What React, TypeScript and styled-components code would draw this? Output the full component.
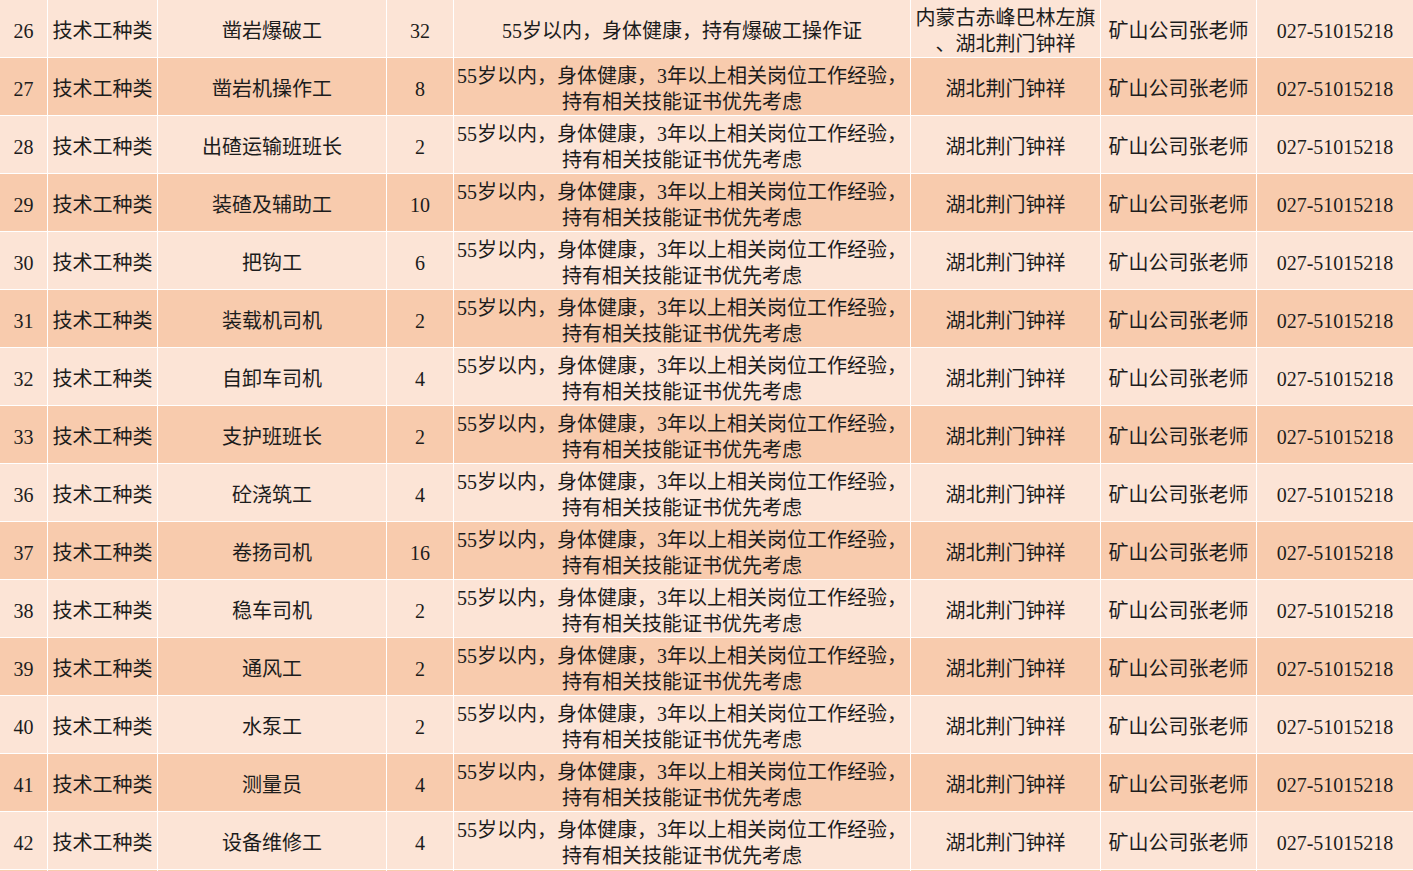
import styled, { createGlobalStyle } from "styled-components";

const GlobalStyle = createGlobalStyle`
  html, body {
    margin: 0;
    padding: 0;
    overflow: hidden;
    background: #ffffff;
  }
`;

const Sheet = styled.div`
  display: grid;
  grid-template-columns: 47px 109px 228px 66px 456px 189px 155px 156px;
  grid-auto-rows: 57px;
  gap: 1px;
  background: #ffffff;
  width: 1413px;
  height: 871px;
  overflow: hidden;
  font-family: "Liberation Serif", "Noto Sans CJK SC", serif;
  font-size: 20px;
  color: #1c1c1c;
`;

const Cell = styled.div<{ $dark: boolean }>`
  display: flex;
  align-items: center;
  justify-content: center;
  box-sizing: border-box;
  padding-top: 4px;
  text-align: center;
  white-space: nowrap;
  line-height: 26px;
  background: ${(p) => (p.$dark ? "#f8cbad" : "#fce4d6")};
  overflow: hidden;
`;

const Lines = styled.span`
  display: block;
`;

const STD = ["55岁以内，身体健康，3年以上相关岗位工作经验，", "持有相关技能证书优先考虑"];

type Row = {
  no: string;
  job: string;
  count: string;
  req: string[];
  place: string[];
};

const rows: Row[] = [
  { no: "26", job: "凿岩爆破工", count: "32", req: ["55岁以内，身体健康，持有爆破工操作证"], place: ["内蒙古赤峰巴林左旗", "、湖北荆门钟祥"] },
  { no: "27", job: "凿岩机操作工", count: "8", req: STD, place: ["湖北荆门钟祥"] },
  { no: "28", job: "出碴运输班班长", count: "2", req: STD, place: ["湖北荆门钟祥"] },
  { no: "29", job: "装碴及辅助工", count: "10", req: STD, place: ["湖北荆门钟祥"] },
  { no: "30", job: "把钩工", count: "6", req: STD, place: ["湖北荆门钟祥"] },
  { no: "31", job: "装载机司机", count: "2", req: STD, place: ["湖北荆门钟祥"] },
  { no: "32", job: "自卸车司机", count: "4", req: STD, place: ["湖北荆门钟祥"] },
  { no: "33", job: "支护班班长", count: "2", req: STD, place: ["湖北荆门钟祥"] },
  { no: "36", job: "砼浇筑工", count: "4", req: STD, place: ["湖北荆门钟祥"] },
  { no: "37", job: "卷扬司机", count: "16", req: STD, place: ["湖北荆门钟祥"] },
  { no: "38", job: "稳车司机", count: "2", req: STD, place: ["湖北荆门钟祥"] },
  { no: "39", job: "通风工", count: "2", req: STD, place: ["湖北荆门钟祥"] },
  { no: "40", job: "水泵工", count: "2", req: STD, place: ["湖北荆门钟祥"] },
  { no: "41", job: "测量员", count: "4", req: STD, place: ["湖北荆门钟祥"] },
  { no: "42", job: "设备维修工", count: "4", req: STD, place: ["湖北荆门钟祥"] },
];

const MultiLine = ({ lines }: { lines: string[] }) => (
  <Lines>
    {lines.map((l, i) => (
      <span key={i}>
        {i > 0 && <br />}
        {l}
      </span>
    ))}
  </Lines>
);

export default function App() {
  return (
    <>
      <GlobalStyle />
      <Sheet>
        {rows.map((r, i) => {
          const dark = i % 2 === 1;
          return [
            <Cell key={`${i}a`} $dark={dark}>{r.no}</Cell>,
            <Cell key={`${i}b`} $dark={dark}>技术工种类</Cell>,
            <Cell key={`${i}c`} $dark={dark}>{r.job}</Cell>,
            <Cell key={`${i}d`} $dark={dark}>{r.count}</Cell>,
            <Cell key={`${i}e`} $dark={dark}><MultiLine lines={r.req} /></Cell>,
            <Cell key={`${i}f`} $dark={dark}><MultiLine lines={r.place} /></Cell>,
            <Cell key={`${i}g`} $dark={dark}>矿山公司张老师</Cell>,
            <Cell key={`${i}h`} $dark={dark}>027-51015218</Cell>,
          ];
        })}
        {Array.from({ length: 8 }).map((_, k) => (
          <Cell key={`pad${k}`} $dark={true} />
        ))}
      </Sheet>
    </>
  );
}
